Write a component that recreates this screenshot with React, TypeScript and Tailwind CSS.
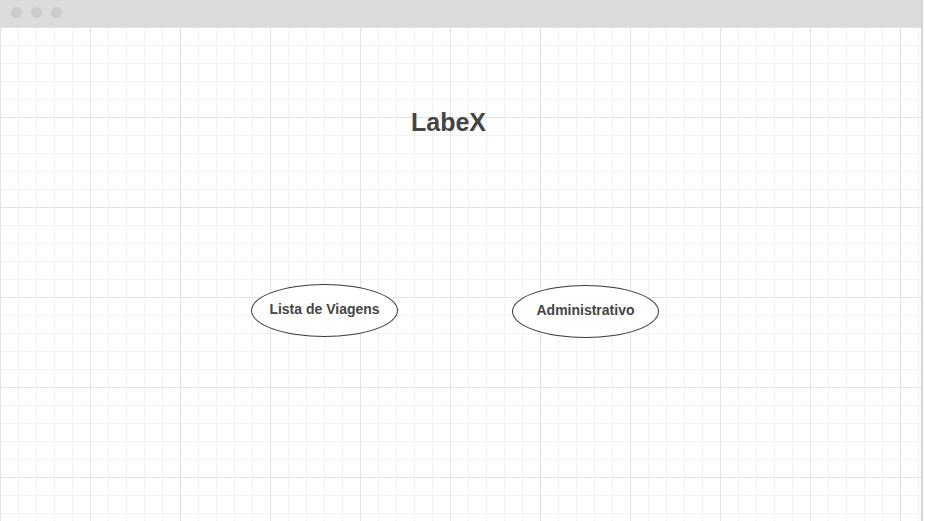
import * as React from "react"

function Dot() {
  return <span className="h-[11px] w-[11px] rounded-full bg-[#cbcbcb]" />
}

function Bubble({ label, className = "" }: { label: string; className?: string }) {
  return (
    <button
      type="button"
      className={`flex h-[53px] w-[147px] items-center justify-center rounded-[50%] border border-[#3a3a3a] bg-white pb-[2px] text-[14px] font-bold text-[#444] ${className}`}
    >
      {label}
    </button>
  )
}

export default function App() {
  return (
    <div className="h-[521px] w-[925px] overflow-hidden bg-white font-['Liberation_Sans',Arial,sans-serif]">
      <div className="flex h-full w-[923px] flex-col border-r-2 border-[#d6d6d6]">
        {/* Window bar */}
        <div className="flex h-[27px] shrink-0 items-center gap-[9px] bg-[#dcdcdc] pl-[11px] pb-[2px]">
          <Dot />
          <Dot />
          <Dot />
        </div>

        {/* Canvas */}
        <div className="flex-1 bg-[linear-gradient(to_right,#e2e2e2_1px,transparent_1px),linear-gradient(to_bottom,#e2e2e2_1px,transparent_1px),linear-gradient(to_right,#f2f2f2_1px,transparent_1px),linear-gradient(to_bottom,#f2f2f2_1px,transparent_1px)] bg-[length:90px_90px,90px_90px,18px_18px,18px_18px]">
          <h1 className="mt-[83px] pl-[411px] text-[25px] font-bold leading-none text-[#444]">LabeX</h1>

          <div className="mt-[149px] flex items-start gap-[114px] pl-[251px]">
            <Bubble label="Lista de Viagens" />
            <Bubble label="Administrativo" className="mt-px" />
          </div>
        </div>
      </div>
    </div>
  )
}
